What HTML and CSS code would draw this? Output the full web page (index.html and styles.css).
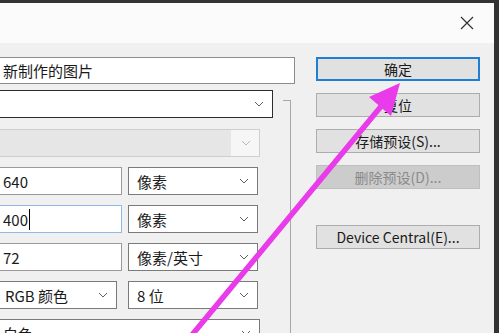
FILE: index.html
```html
<!DOCTYPE html>
<html lang="zh-CN">
<head>
  <meta charset="UTF-8" />
  <title>新建</title>
  <link rel="stylesheet" href="styles.css">
</head>
<body>

  <div class="window">
    <div class="titlebar">
      <svg class="close" width="14" height="14" viewBox="0 0 14 14">
        <path d="M1 1 L13 13 M13 1 L1 13" stroke="#333" stroke-width="1.2" fill="none"/>
      </svg>
    </div>

    <div class="content">
      <div class="form">
        <div class="field name">新制作的图片</div>

        <div class="group">
          <div class="field select preset"><span></span><i class="chev"></i></div>
          <div class="field select size disabled"><span></span><i class="chev"></i></div>

          <div class="row">
            <div class="field num">640</div>
            <div class="field select unit"><span>像素</span><i class="chev"></i></div>
          </div>
          <div class="row">
            <div class="field num focus"><span class="caret">400</span></div>
            <div class="field select unit"><span>像素</span><i class="chev"></i></div>
          </div>
          <div class="row">
            <div class="field num">72</div>
            <div class="field select unit"><span>像素/英寸</span><i class="chev"></i></div>
          </div>
          <div class="row">
            <div class="field select mode"><span>RGB 颜色</span><i class="chev"></i></div>
            <div class="field select unit"><span>8 位</span><i class="chev"></i></div>
          </div>
          <div class="field select bg"><span>白色</span><i class="chev"></i></div>
        </div>
      </div>

      <div class="buttons">
        <button class="btn default">确定</button>
        <button class="btn">复位</button>
        <button class="btn">存储预设(S)...</button>
        <button class="btn" disabled>删除预设(D)...</button>
        <button class="btn device">Device Central(E)...</button>
      </div>
    </div>
  </div>

  <!-- hand-drawn arrow over the dialog -->
  <svg class="arrow" width="499" height="333" viewBox="0 0 499 333">
    <path d="M187 341 L383 104" stroke="#e93be9" stroke-width="5.5" stroke-linecap="round" fill="none"/>
    <polygon points="400,83 369,97 391,116" fill="#e93be9"/>
  </svg>

</body>
</html>
```

FILE: styles.css
```css
body {
  margin: 0;
  width: 499px;
  height: 333px;
  overflow: hidden;
  background: #333;
  font-family: "Noto Sans CJK SC", "Noto Sans", sans-serif;
  font-size: 15px;
  color: #1a1a1a;
  position: relative;
}

.window {
  margin-top: 3px;
  width: 494px;
  height: 330px;
  background: #f0f0f0;
  overflow: hidden;
}

.titlebar {
  height: 40px;
  background: #fbfbfb;
  display: flex;
  align-items: center;
  justify-content: flex-end;
  padding-right: 20px;
}

.content {
  display: flex;
  align-items: flex-start;
  padding-top: 14px;
}

.form {
  margin-left: -10px;
  width: 305px;
  display: flex;
  flex-direction: column;
}

.field {
  box-sizing: border-box;
  height: 28px;
  background: #fff;
  border: 1px solid #7a7a7a;
  display: flex;
  align-items: center;
  padding-left: 12px;
  white-space: nowrap;
}

.name {
  width: 305px;
  height: 27px;
  border-color: #8c8c8c;
}

.group {
  position: relative;
  width: 301px;
  margin-top: 6px;
  display: flex;
  flex-direction: column;
  gap: 10px;
}

.group::before {
  content: '';
  position: absolute;
  right: 0;
  top: 10px;
  bottom: -20px;
  width: 7px;
  border-top: 1px solid #a8a8a8;
  border-right: 1px solid #a8a8a8;
}

.select {
  justify-content: space-between;
  padding-right: 8px;
}

.chev {
  width: 10px;
  height: 6px;
  background: url("data:image/svg+xml,%3Csvg xmlns='http://www.w3.org/2000/svg' width='10' height='6'%3E%3Cpath d='M1 1 L5 5 L9 1' stroke='%23606060' fill='none'/%3E%3C/svg%3E");
}

.preset {
  width: 283px;
  border-color: #2d2d2d;
}

.size {
  width: 270px;
  margin-top: 1px;
}

.disabled {
  background: linear-gradient(to right, #e6e6e6 240px, #f6f6f6 240px);
  border-color: #cfcfcf;
}

.disabled .chev {
  opacity: 0.4;
}

.row {
  display: flex;
  gap: 6px;
}

.num {
  width: 132px;
  border-color: #9a9a9a;
}

.focus {
  border-color: #8dbbe6;
}

.caret {
  border-right: 1px solid #000;
  padding-right: 1px;
}

.unit {
  width: 130px;
  padding-left: 8px;
}

.mode {
  width: 127px;
  margin-right: 5px;
  padding-left: 14px;
}

.bg {
  width: 270px;
}

.buttons {
  margin-left: 21px;
  width: 164px;
  display: flex;
  flex-direction: column;
  gap: 12px;
}

.btn {
  height: 24px;
  padding: 0;
  background: #e1e1e1;
  border: 1px solid #adadad;
  font-family: "Noto Sans CJK SC", "Noto Sans", sans-serif;
  font-size: 14px;
  color: #1a1a1a;
  line-height: 1;
}

.btn.default {
  border: 2px solid #1f7fd3;
}

.btn:disabled {
  background: #cccccc;
  border-color: #bfbfbf;
  color: #8a8a8a;
}

.btn.device {
  margin-top: 24px;
}

.arrow {
  position: absolute;
  left: 0;
  top: 0;
  pointer-events: none;
}
```
